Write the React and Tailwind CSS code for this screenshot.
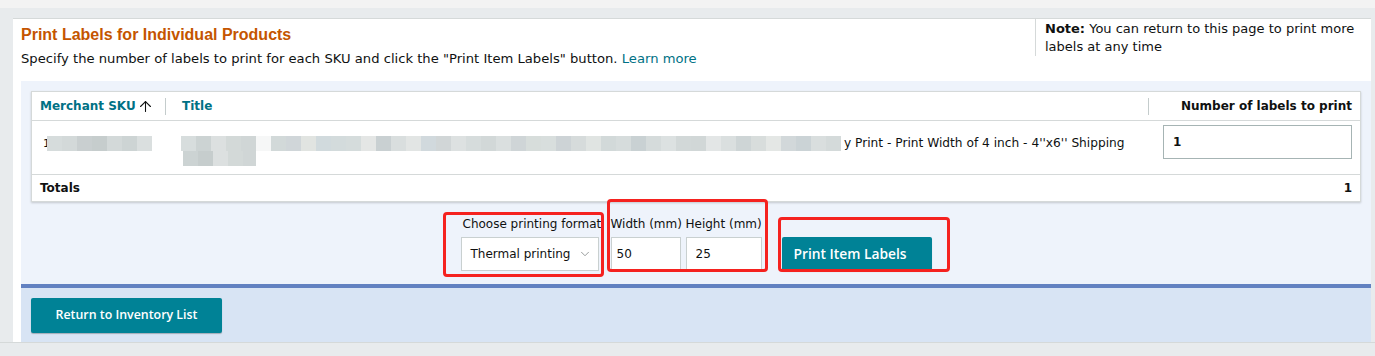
import { ArrowUp, ChevronDown } from 'lucide-react';

const skuShades = ['#d6dcdc', '#d3d9d9', '#c9cfd0', '#c6cdcd', '#d3d9d9', '#cdd4d4', '#dadfdf'];
const titleShades = [
  '#d7dddd', '#ccd3d3', '#dce0e0', '#d3d9d8', '#d0d6d6', '#f6f7f7', '#d2d9d9', '#d0d6d9',
  '#e1e4e1', '#d1dadd', '#d3dbdc', '#d5dcdc', '#e4e6e5', '#c9d0d2', '#d9dede', '#e2e5e4',
  '#d1d9dd', '#d1d6d7', '#dde1e1', '#d6dcdc', '#d2d8d8', '#dadfdf', '#cfd5d7', '#d7dddb',
  '#d8dedd', '#cdd3d6', '#d6dbdb', '#e0e4e2', '#d2d9d9', '#d6dcdc', '#c9d1d3', '#d5dbdb',
  '#dce1e1', '#d2d8d8', '#d1d7d7', '#e3e6e6', '#dadfdf', '#ced5d6', '#d8dddc', '#e4e7e5',
  '#d2d8da', '#cbd3d6', '#d9dede', '#d4dada'
];
const secondShades = ['#ccd3d3', '#c6cdcd', '#dce0e0', '#d3d9d8', '#d0d6d6'];

function Mosaic({ shades, className = '' }) {
  return (
    <span className={`flex h-[15px] ${className}`}>
      {shades.map((c, i) => (
        <span key={i} className="h-full w-[15px] shrink-0" style={{ background: c }} />
      ))}
    </span>
  );
}

function Marker({ className }) {
  return <div className={`pointer-events-none absolute rounded-[4px] border-[3px] border-[#f5221f] ${className}`} />;
}

export default function App() {
  return (
    <div className="relative h-[356px] w-[1375px] overflow-hidden bg-[#e8ebed] font-['DejaVu_Sans',sans-serif] text-[12px] text-[#0f1111]">
      <div className="h-[8px] bg-[#f3f3f3]" />

      <div className="ml-[13px] mr-[4px] mt-[10px] flex h-[324px] flex-col border-t border-[#d5d9d9] bg-white">
        {/* header */}
        <div className="flex h-[62px] text-[13px]">
          <div className="flex-1 pl-[8px] pt-[6px]">
            <h1 className="font-['Liberation_Sans',Arial,sans-serif] text-[16px] font-bold leading-[20px] text-[#c45500]">
              Print Labels for Individual Products
            </h1>
            <p className="mt-[6px] text-[13.15px] leading-[16px]">
              Specify the number of labels to print for each SKU and click the "Print Item Labels" button.{' '}
              <span className="text-[#007185]">Learn more</span>
            </p>
          </div>
          <div className="h-[37px] w-[336px] border-l border-[#d5d9d9] pl-[9px] pr-[6px] pt-[1px] leading-[18px]">
            <span className="font-bold">Note:</span> You can return to this page to print more labels at any time
          </div>
        </div>

        {/* blue work area */}
        <div className="ml-[8px] h-[203px] bg-[#eef3fb] px-[10px] pt-[10px]">
          <div className="border border-[#d5d9d9] bg-white shadow-[0_1px_2px_rgba(0,0,0,0.18)]">
            <div className="flex h-[29px] items-center border-b border-[#d5d9d9] font-bold">
              <div className="flex w-[134px] items-center justify-between pl-[8px]">
                <span className="flex items-center text-[#007185]">
                  Merchant SKU
                  <ArrowUp size={17} strokeWidth={1.5} className="ml-[1px] text-[#0f1111]" />
                </span>
                <span className="h-[17px] w-px bg-[#c4cccc]" />
              </div>
              <div className="flex-1 pl-[16px] text-[#007185]">Title</div>
              <span className="h-[17px] w-px bg-[#c4cccc]" />
              <div className="w-[211px] pr-[8px] text-right">Number of labels to print</div>
            </div>

            <div className="flex h-[54px] border-b border-[#d5d9d9]">
              <div className="flex w-[134px] items-start pl-[11px] pt-[15px]">
                <span className="text-[11px] leading-[15px]">1</span>
                <Mosaic shades={skuShades} className="-ml-[3px] w-[120px] overflow-hidden" />
              </div>
              <div className="flex-1 pl-[15px] pt-[15px]">
                <div className="flex items-center">
                  <Mosaic shades={titleShades} className="w-[663px] overflow-hidden" />
                  <span className="text-[12.2px] leading-[15px]">y Print - Print Width of 4 inch - 4''x6'' Shipping</span>
                </div>
                <Mosaic shades={secondShades} className="ml-[2px] w-[73px] overflow-hidden" />
              </div>
              <div className="w-[211px] pl-[14px] pr-[8px] pt-[4px]">
                <input
                  readOnly
                  value="1"
                  className="h-[34px] w-full border border-[#a6b4b4] px-[9px] font-bold outline-none"
                />
              </div>
            </div>

            <div className="flex h-[26px] items-center justify-between px-[8px] font-bold">
              <span>Totals</span>
              <span>1</span>
            </div>
          </div>

          {/* print controls */}
          <div className="mt-[14px] flex items-end justify-center gap-[5px]">
            <div className="flex w-[145px] flex-col">
              <span className="w-[145px] overflow-hidden whitespace-nowrap pl-[2px] leading-[16px]">Choose printing format</span>
              <div className="mt-[5px] flex h-[34px] w-[138px] items-center justify-between border border-[#c9d0d0] bg-white pl-[9px] pr-[6px]">
                <span>Thermal printing</span>
                <ChevronDown size={14} strokeWidth={1.5} className="text-[#8a8f8f]" />
              </div>
            </div>
            <div className="flex w-[70px] flex-col">
              <span className="whitespace-nowrap leading-[16px]">Width (mm)</span>
              <input readOnly value="50" className="mt-[5px] h-[34px] w-full border border-[#c9d0d0] bg-white px-[5px] outline-none" />
            </div>
            <div className="flex w-[76px] flex-col">
              <span className="whitespace-nowrap leading-[16px]">Height (mm)</span>
              <input readOnly value="25" className="mt-[5px] h-[34px] w-full border border-[#c9d0d0] bg-white px-[9px] outline-none" />
            </div>
            <button className="ml-[15px] h-[34px] w-[150px] rounded-[2px] bg-[#008296] pl-[12px] text-left font-['Open_Sans',sans-serif] text-[13.8px] font-semibold text-white shadow-[0_1px_1px_rgba(0,0,0,0.2)]">
              Print Item Labels
            </button>
          </div>
        </div>

        <div className="ml-[8px] h-[4px] bg-[#6281c1]" />
        <div className="ml-[8px] flex-1 bg-[#d8e4f4] px-[10px] pt-[10px]">
          <button className="h-[35px] w-[191px] rounded-[2px] bg-[#008296] font-['Open_Sans',sans-serif] text-[12.4px] font-semibold text-white shadow-[0_1px_1px_rgba(0,0,0,0.25)]">
            Return to Inventory List
          </button>
        </div>
      </div>
      <div className="h-px bg-[#d5d9d9]" />

      <Marker className="left-[443px] top-[212px] h-[65px] w-[161px]" />
      <Marker className="left-[607px] top-[199px] h-[73px] w-[161px]" />
      <Marker className="left-[778px] top-[217px] h-[55px] w-[172px]" />
    </div>
  );
}
